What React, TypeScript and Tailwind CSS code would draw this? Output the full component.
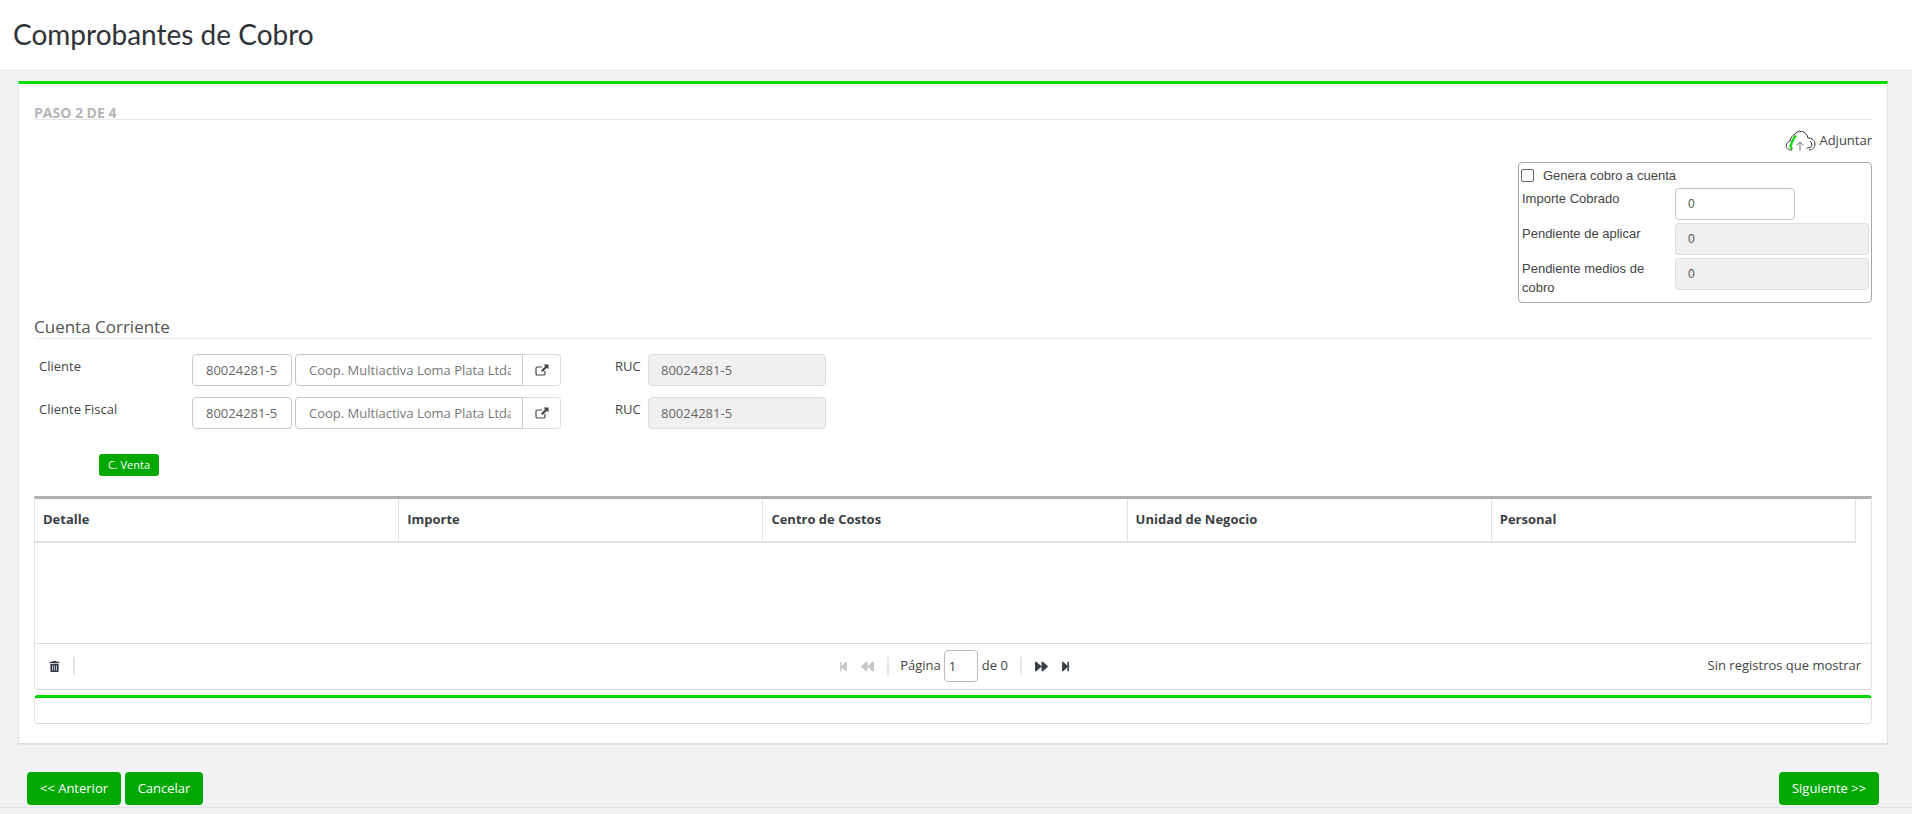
import React from 'react';
import { FaBackward, FaForward, FaStepBackward, FaStepForward, FaTrashAlt } from 'react-icons/fa';

const columns = ['Detalle', 'Importe', 'Centro de Costos', 'Unidad de Negocio', 'Personal'];

const ExternalLink: React.FC = () => (
  <svg width="14" height="12" viewBox="0 0 14 12" fill="none">
    <path d="M10 7v2.6A1.4 1.4 0 0 1 8.6 11H2.4A1.4 1.4 0 0 1 1 9.6V4.4A1.4 1.4 0 0 1 2.4 3H7" stroke="#444" strokeWidth="1.2" />
    <path d="M8.5 0.5H13.5V5.5L11.8 3.8L7.6 8L6 6.4L10.2 2.2Z" fill="#444" />
  </svg>
);

const CloudUpload: React.FC = () => (
  <svg width="31" height="22" viewBox="0 0 31 22" fill="none">
    <path d="M7 20C3 20 1 18 1.2 15.5C1.4 13 3 11.6 5 11C5.6 7.5 7.6 5.5 9.5 4.5C11 2 14 1 16.5 1.4C20 2 22.4 4.6 23 8C27 8 30 10.6 30 14C30 17.4 27.4 20 24 20" stroke="#333" strokeWidth="1" />
    <path d="M25 11C27 12.5 27.4 15.5 26 17C25 18 23 18 21.5 18" stroke="#333" strokeWidth="1" />
    <path d="M7.5 19C5 18 5 15.5 6.5 14C6.2 12.5 7.6 11.5 8.2 9.5C8.6 8 9.5 7 11 5.5" stroke="#00d900" strokeWidth="2.2" />
    <path d="M15 21V12M11.5 15.5L15 12L18.5 15.5" stroke="#777" strokeWidth="1" />
  </svg>
);

const BoxField: React.FC<{ label: string; readOnly?: boolean; className: string }> = ({ label, readOnly, className }) => (
  <div className={`flex ${className}`}>
    <label className="w-[156px] pl-[3px] pt-[1px] pr-2 leading-[19px]">{label}</label>
    <input
      readOnly
      value="0"
      className={`h-8 rounded-[4px] border border-[#c4c4c4] px-3 text-[12px] text-[#555] outline-none ${readOnly ? 'w-[194px] bg-[#f0f0f0] border-[#dcdcdc]' : 'w-[120px] bg-white'}`}
    />
  </div>
);

const ClientRow: React.FC<{ label: string }> = ({ label }) => (
  <div className="flex h-8 items-start">
    <label className="w-[158px] pl-[5px] leading-[24px] text-[#444]">{label}</label>
    <input readOnly value="80024281-5" className="h-8 w-[100px] rounded-[4px] border border-[#c8c8c8] pl-[13px] text-[#666] outline-none" />
    <div className="ml-[3px] flex">
      <input readOnly value="Coop. Multiactiva Loma Plata Ltda" className="h-8 w-[228px] rounded-l-[4px] border border-[#c8c8c8] pl-[13px] pr-[11px] text-[#777] outline-none" />
      <button className="flex h-8 w-[38px] items-center justify-center rounded-r-[4px] border border-l-0 border-[#ddd] bg-white">
        <ExternalLink />
      </button>
    </div>
    <label className="ml-[54px] w-[33px] leading-[24px] text-[#444]">RUC</label>
    <input readOnly value="80024281-5" className="h-8 w-[178px] rounded-[4px] border border-[#dcdcdc] bg-[#f0f0f0] px-3 text-[#666] outline-none" />
  </div>
);

const App: React.FC = () => {
  return (
    <div className="flex h-[814px] flex-col overflow-hidden bg-[#f1f2f2] font-['Open_Sans',sans-serif] text-[13px] text-[#444]">
      {/* Header */}
      <header className="h-[71px] shrink-0 border-b border-[#e5e5e5] bg-white pl-[13px] pt-[15px]">
        <h1 className="font-['Lato',sans-serif] text-[28px] leading-[38px] font-normal text-[#2f3338]">Comprobantes de Cobro</h1>
      </header>

      {/* Wizard panel */}
      <main className="ml-[18px] mr-[24px] mt-[10px] h-[663px] shrink-0 border-x border-b border-t-[3px] border-x-[#e2e2e2] border-b-[#dcdcdc] border-t-[#00d900] bg-white px-[15px] shadow-[0_1px_1px_rgba(0,0,0,0.05)]">
        <div className="mt-[21px] h-[15px] border-b border-[#e6e6e6] text-[14px] leading-[15px] font-bold text-[#b5b5b5]">PASO 2 DE 4</div>

        <div className="mt-[10px] flex h-[22px] items-center justify-end gap-[3px] text-[#444]">
          <CloudUpload />
          <span className="text-[13px]">Adjuntar</span>
        </div>

        <div className="flex justify-end">
          <div className="mt-[10px] h-[141px] w-[354px] rounded-[4px] border border-[#a8a8a8] font-['Liberation_Sans',sans-serif] text-[13px] text-[#444]">
            <div className="flex h-[19px] items-start pl-[2px] pt-[6px]">
              <span className="h-[13px] w-[13px] rounded-[2px] border border-[#666] bg-white" />
              <span className="ml-[9px] leading-[14px]">Genera cobro a cuenta</span>
            </div>
            <BoxField label="Importe Cobrado" className="mt-[6px]" />
            <BoxField label="Pendiente de aplicar" readOnly className="mt-[3px]" />
            <BoxField label="Pendiente medios de cobro" readOnly className="mt-[3px]" />
          </div>
        </div>

        <h3 className="mt-[12px] h-[24px] border-b border-[#eaeaea] text-[17px] leading-[23px] font-normal text-[#555]">Cuenta Corriente</h3>

        <div className="mt-[15px] flex flex-col gap-[11px]">
          <ClientRow label="Cliente" />
          <ClientRow label="Cliente Fiscal" />
        </div>

        <button className="ml-[65px] mt-[25px] block h-[22px] w-[60px] rounded-[3px] bg-[#00a800] text-[11px] text-white">C. Venta</button>

        {/* Grid */}
        <div className="mt-[20px] h-[194px] rounded-b-[4px] border-x border-b border-t-[3px] border-x-[#e2e2e2] border-b-[#ddd] border-t-[#b0b0b0]">
          <div className="flex h-[44px] w-[1821px] border-b-2 border-[#e2e2e2]">
            {columns.map((col) => (
              <div key={col} className="flex w-[364.2px] items-center border-r border-[#e2e2e2] pl-[8px] font-bold text-[#3a3f44]">
                {col}
              </div>
            ))}
          </div>
          <div className="h-[101px] border-b border-[#ddd]" />
          <div className="grid h-[44px] grid-cols-[1fr_auto_1fr] items-center">
            <div className="flex h-[18px] w-[40px] items-center justify-center border-r-2 border-[#e6e6e6] pl-[1px] text-[#2f3a45]">
              <FaTrashAlt size={11} />
            </div>
            <div className="flex items-center">
              <FaStepBackward size={11} className="ml-[4px] text-[#c6c6c6]" />
              <FaBackward size={13} className="ml-[12px] text-[#c6c6c6]" />
              <span className="ml-[13px] h-[18px] border-l-2 border-[#e6e6e6]" />
              <span className="ml-[11px]">Página</span>
              <input readOnly value="1" className="ml-[3px] h-8 w-[34px] rounded-[4px] border border-[#bbb] pl-[4px] outline-none" />
              <span className="ml-[4px]">de 0</span>
              <span className="ml-[12px] h-[18px] border-l-2 border-[#e6e6e6]" />
              <FaForward size={13} className="ml-[13px] text-[#3a3f44]" />
              <FaStepForward size={11} className="ml-[12px] mr-[1px] text-[#3a3f44]" />
            </div>
            <span className="justify-self-end pr-[10px]">Sin registros que mostrar</span>
          </div>
        </div>

        <div className="mt-[5px] h-[29px] rounded-[4px] border-x border-b border-t-[3px] border-x-[#e2e2e2] border-b-[#ddd] border-t-[#00d900]" />
      </main>

      {/* Footer actions */}
      <footer className="mt-[28px] flex h-[33px] shrink-0 pl-[27px] pr-[33px] text-white">
        <button className="h-[33px] w-[94px] rounded-[4px] bg-[#00a800] text-[13px]">&lt;&lt; Anterior</button>
        <button className="ml-[4px] h-[33px] w-[78px] rounded-[4px] bg-[#00a800] text-[13px]">Cancelar</button>
        <button className="ml-auto h-[33px] w-[100px] rounded-[4px] bg-[#00a800] text-[13px]">Siguiente &gt;&gt;</button>
      </footer>
      <div className="mt-[2px] flex-1 border-t border-[#e2e2e2]" />
    </div>
  );
};

export default App;
